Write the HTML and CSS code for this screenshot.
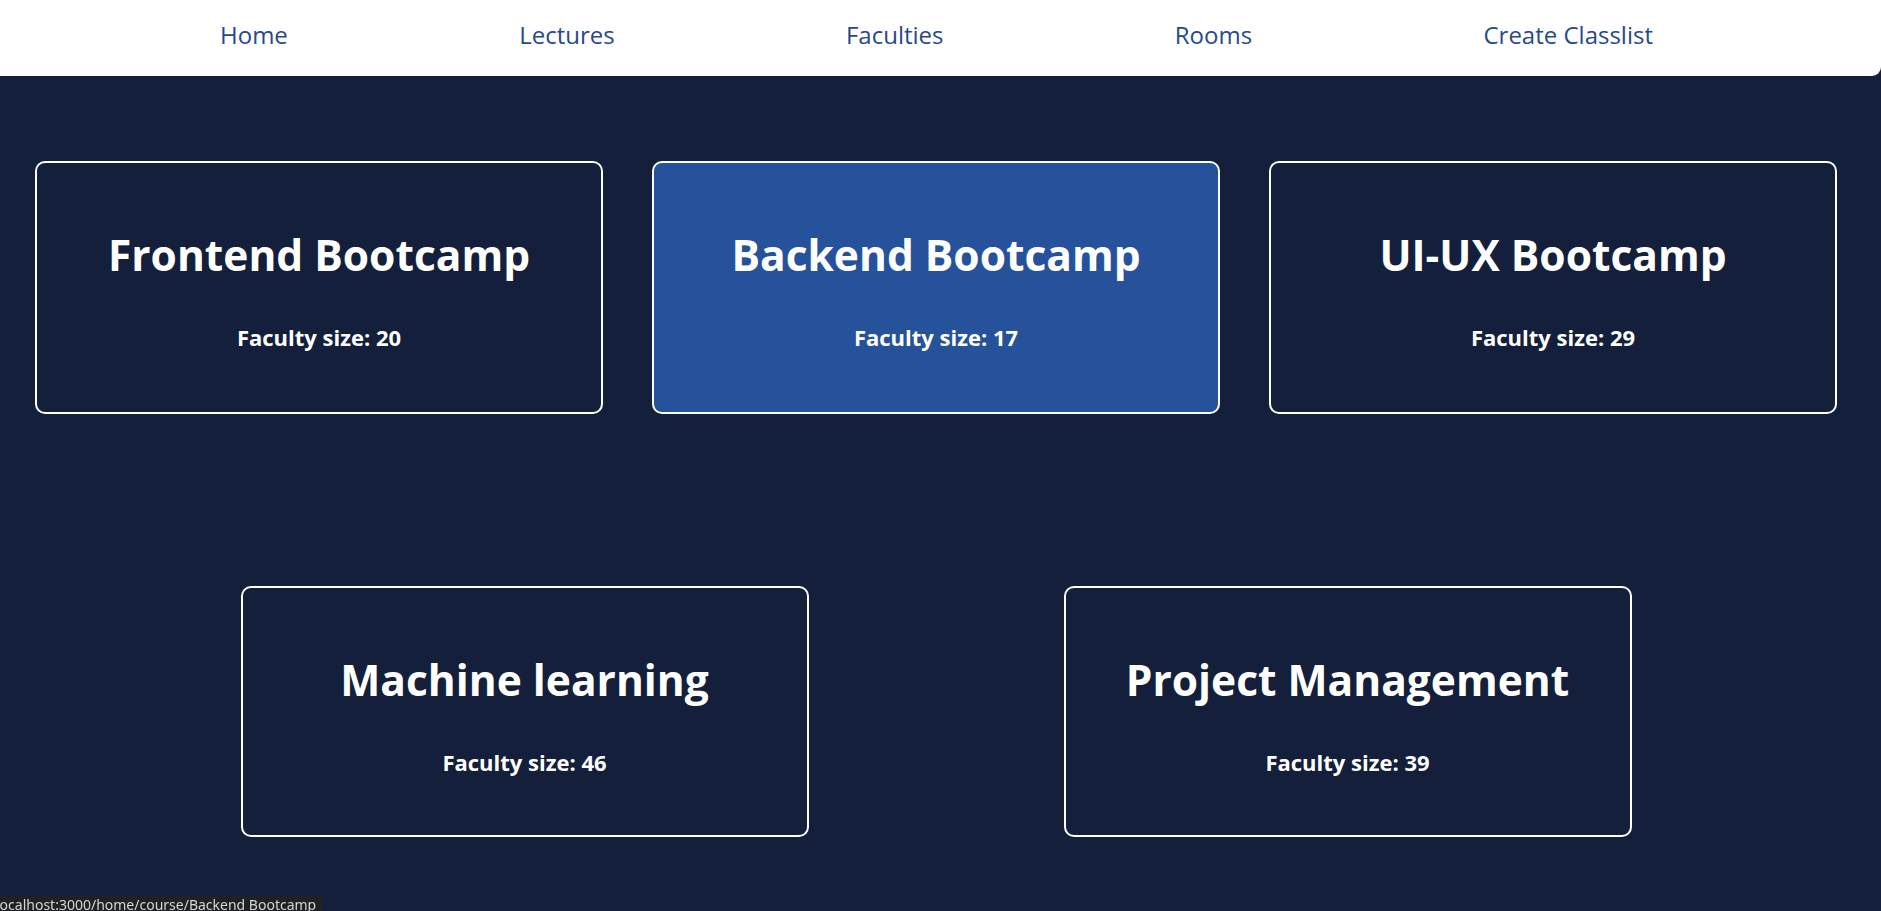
FILE: index.html
```html
<!DOCTYPE html>
<html lang="en">
<head>
<meta charset="utf-8">
<title>Faculties</title>
<link rel="stylesheet" href="styles.css">
</head>
<body>
<nav class="navbar">
  <a class="nav-link" href="#">Home</a>
  <a class="nav-link" href="#">Lectures</a>
  <a class="nav-link" href="#">Faculties</a>
  <a class="nav-link" href="#">Rooms</a>
  <a class="nav-link" href="#">Create Classlist</a>
</nav>
<main class="courses">
  <div class="row row-top">
    <a class="card" href="#">
      <h1 class="card-title">Frontend Bootcamp</h1>
      <h3 class="card-size">Faculty size: 20</h3>
    </a>
    <a class="card card-active" href="#">
      <h1 class="card-title">Backend Bootcamp</h1>
      <h3 class="card-size">Faculty size: 17</h3>
    </a>
    <a class="card" href="#">
      <h1 class="card-title">UI-UX Bootcamp</h1>
      <h3 class="card-size">Faculty size: 29</h3>
    </a>
  </div>
  <div class="row row-bottom">
    <a class="card" href="#">
      <h1 class="card-title">Machine learning</h1>
      <h3 class="card-size">Faculty size: 46</h3>
    </a>
    <a class="card" href="#">
      <h1 class="card-title">Project Management</h1>
      <h3 class="card-size">Faculty size: 39</h3>
    </a>
  </div>
</main>
<div class="status-bar"><span class="status-text">localhost:3000/home/course/Backend Bootcamp</span></div>
</body>
</html>
```

FILE: styles.css
```css
html, body {
  margin: 0;
  padding: 0;
}

body {
  background: #141f3b;
  font-family: "Open Sans", "Noto Sans", sans-serif;
  min-height: 911px;
  overflow: hidden;
}

.navbar {
  height: 76px;
  background: #ffffff;
  display: flex;
  align-items: center;
  justify-content: space-between;
  border-bottom-right-radius: 9px;
  padding: 0 228px 7px 220px;
  box-sizing: border-box;
}

.nav-link {
  color: #28498a;
  text-decoration: none;
  font-size: 24px;
  line-height: 32px;
}

.courses {
  padding: 85px 0 0 35px;
}

.row-top {
  display: grid;
  grid-template-columns: repeat(3, 568px);
  gap: 49px;
}

.row-bottom {
  display: flex;
  justify-content: center;
  gap: 255px;
  margin-top: 172px;
  width: 1802px;
}

.card {
  box-sizing: border-box;
  width: 568px;
  height: 253px;
  border: 2px solid #ffffff;
  border-radius: 10px;
  display: flex;
  flex-direction: column;
  align-items: center;
  color: #ffffff;
  text-decoration: none;
}

.row-bottom .card {
  height: 251px;
}

.card-active {
  background: #25529b;
}

.card-title {
  margin: 64px 0 0;
  font-size: 42.5px;
  font-weight: 700;
  line-height: 56px;
}

.card-size {
  margin: 40px 0 0;
  font-size: 22px;
  font-weight: 700;
  line-height: 28px;
}

.status-bar {
  position: fixed;
  left: 0;
  bottom: 0;
  width: 322px;
  height: 15px;
  background: #202124;
  border-top-right-radius: 3px;
  overflow: hidden;
  white-space: nowrap;
}

.status-text {
  display: block;
  margin-left: -4px;
  font-family: "Noto Sans", "Open Sans", sans-serif;
  font-size: 14px;
  line-height: 18px;
  color: #d5d5d5;
}
```
